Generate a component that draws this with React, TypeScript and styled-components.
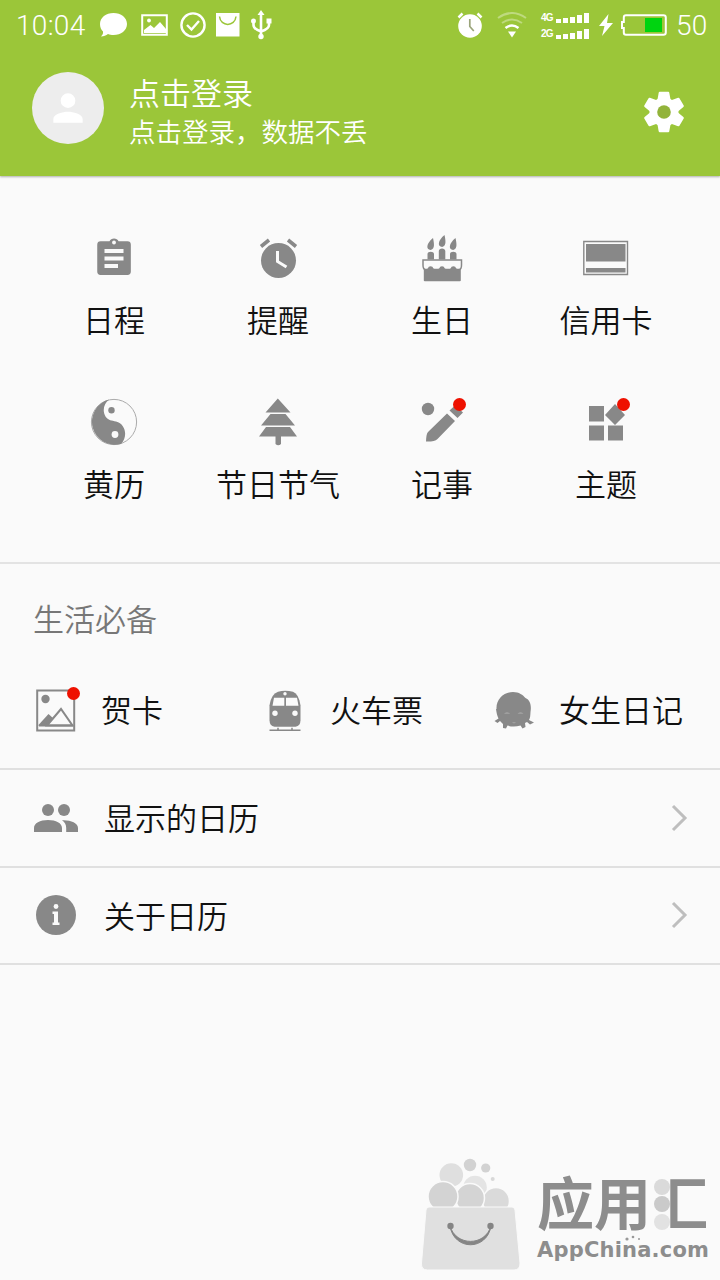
import React from 'react';
import styled, { createGlobalStyle } from 'styled-components';

const GREY = '#888888';
const GREEN = '#9bc639';
const PAPER = '#fafafa';

const GlobalStyle = createGlobalStyle`
  * { box-sizing: border-box; }
  body {
    margin: 0;
    background: ${PAPER};
    font-family: Roboto, "Noto Sans CJK SC", sans-serif;
    font-weight: 350;
    color: #111;
  }
  svg { display: block; flex: none; }
`;

const Page = styled.main`
  width: 720px;
  height: 1280px;
  display: flex;
  flex-direction: column;
  overflow: hidden;
  background: ${PAPER};
`;

const Header = styled.header`
  height: 176px;
  flex: none;
  background: ${GREEN};
  color: #fff;
  box-shadow: 0 1px 2px rgba(0, 0, 0, 0.3);
`;

const StatusBar = styled.div`
  height: 50px;
  padding: 0 12px 0 16px;
  display: flex;
  align-items: center;
`;

const StatusText = styled.span<{ $width: number; $gap?: number }>`
  width: ${(p) => p.$width}px;
  margin-left: ${(p) => p.$gap ?? 0}px;
  padding-top: 1px;
  font-size: 28px;
  font-weight: 300;
  letter-spacing: 0.3px;
  line-height: 50px;
  white-space: nowrap;
`;

const StatusIcon = styled.svg<{ $gap: number }>`
  margin-left: ${(p) => p.$gap}px;
`;

const Spacer = styled.div`
  flex: 1;
`;

const Signals = styled.div`
  width: 50px;
  margin-left: 14px;
  display: flex;
  flex-direction: column;
  gap: 5px;
`;

const SignalLine = styled.div`
  height: 11px;
  display: flex;
  align-items: flex-end;
  gap: 2px;
`;

const SignalLabel = styled.span`
  width: 13px;
  font: 700 10px/11px "Liberation Sans", sans-serif;
  letter-spacing: -0.8px;
`;

const SignalBar = styled.i<{ $h: number }>`
  width: 5px;
  height: ${(p) => p.$h}px;
  background: #fff;
`;

const Account = styled.div`
  height: 116px;
  padding: 0 32px;
  display: flex;
  align-items: center;
`;

const Avatar = styled.div`
  width: 72px;
  height: 72px;
  border-radius: 50%;
  background: #ededed;
  display: flex;
  align-items: center;
  justify-content: center;
`;

const AccountText = styled.div`
  flex: 1;
  margin-left: 25px;
  padding-top: 10px;
`;

const AccountTitle = styled.div`
  font-size: 31px;
  line-height: 40px;
`;

const AccountHint = styled.div`
  font-size: 26.5px;
  line-height: 36px;
`;

const SettingsButton = styled.div`
  margin-top: 8px;
`;

const Grid = styled.section`
  height: 388px;
  flex: none;
  padding: 51px 32px 0;
  display: grid;
  grid-template-columns: repeat(4, 164px);
  grid-auto-rows: 164px;
  border-bottom: 2px solid #e3e3e3;
`;

const Tile = styled.div`
  display: flex;
  flex-direction: column;
  align-items: center;
`;

const IconBox = styled.div`
  position: relative;
  width: 48px;
  height: 48px;
  margin: 7px 0;
`;

const Badge = styled.i<{ $top: number; $right: number }>`
  position: absolute;
  top: ${(p) => p.$top}px;
  right: ${(p) => p.$right}px;
  width: 13px;
  height: 13px;
  border-radius: 50%;
  background: #ee1100;
`;

const Label = styled.span`
  padding-top: 2px;
  font-size: 31px;
  line-height: 62px;
  white-space: nowrap;
`;

const Essentials = styled.section`
  height: 206px;
  flex: none;
  border-bottom: 2px solid #e0e0e0;
`;

const SectionTitle = styled.h2`
  margin: 0;
  padding: 27px 0 0 33px;
  font-size: 31px;
  font-weight: 350;
  line-height: 60px;
  color: #777;
`;

const Shortcuts = styled.div`
  margin-top: 26px;
  padding-left: 31px;
  display: grid;
  grid-template-columns: repeat(3, 229px);
`;

const Shortcut = styled.div`
  display: flex;
  align-items: center;
  gap: 22px;

  ${Label} {
    padding-top: 4px;
  }
`;

const Row = styled.div`
  height: 97.5px;
  flex: none;
  padding: 0 32px;
  display: flex;
  align-items: center;
  gap: 24px;
  border-bottom: 2px solid #e0e0e0;

  ${Label} {
    padding-top: 5px;
  }
`;

const Brand = styled.footer`
  margin-top: auto;
  padding: 0 9px 9px 0;
  display: flex;
  justify-content: flex-end;
  align-items: flex-end;
  gap: 14px;
  color: #8d8d8d;
`;

const Wordmark = styled.div`
  width: 174px;
  height: 96px;
`;

const BrandName = styled.div`
  position: relative;
  height: 62px;
  font: 700 57px/50px "Noto Sans CJK SC", sans-serif;
  white-space: nowrap;
`;

const ClippedGlyph = styled.span`
  display: inline-block;
  clip-path: inset(-10px 0 -10px 19px);
`;

const BrandDots = styled.svg`
  position: absolute;
  left: 116px;
  top: 0;
`;

const BrandUrl = styled.div`
  position: relative;
  font: 700 21px/26px "DejaVu Sans", sans-serif;
  letter-spacing: 0.2px;
  white-space: nowrap;
`;

const UrlDots = styled.svg`
  position: absolute;
  left: 86px;
  top: -2px;
`;

const Icon = ({ children }: { children: React.ReactNode }) => (
  <svg width="48" height="48" viewBox="0 0 48 48" fill={GREY}>{children}</svg>
);

const ScheduleIcon = () => (
  <Icon>
    <path d="M10 7h9.3a5.2 5.2 0 0 1 9.4 0H38a3.5 3.5 0 0 1 3.500 3.500v28a3.500 3.500 0 0 1-3.500 3.500H10a3.500 3.500 0 0 1-3.500-3.500v-28A3.500 3.500 0 0 1 10 7z" transform="translate(1 .6) scale(.96)" />
    <circle cx="24" cy="8.500" r="1.900" fill={PAPER} />
    <path d="M14.500 15h19v4h-19zM14.500 22.500h19v4h-19zM14.500 30h13.500v4H14.500z" fill={PAPER} />
  </Icon>
);

const ReminderIcon = () => (
  <Icon>
    <circle cx="24.500" cy="26.500" r="17.500" />
    <path d="M7 12.500l8-6.500M42 12.500l-8-6.500" stroke={GREY} strokeWidth="3.600" />
    <path d="M23.500 17v10.500l9 5.500" fill="none" stroke={PAPER} strokeWidth="3" />
  </Icon>
);

const CakeIcon = () => (
  <Icon>
    <path d="M15 4c.8 4 2.600 11-2.300 12-5-.5-4.500-6.500 2.300-12zM26.500 1c.8 4 2.600 11-2.300 12-5-.5-4.500-6.500 2.300-12zM37.500 4c.8 4 2.600 11-2.300 12-5-.5-4.500-6.500 2.300-12z" />
    <path d="M9.500 25.500V20c0-3 6.500-3 6.500 0v5.500zM20.800 25.500V17c0-3.500 6.500-3.500 6.500 0v8.500zM32 25.500V20c0-3 6.500-3 6.500 0v5.500z" />
    <path d="M5 26h38.500v5q0 4.500-2.500 4.500H7.500Q5 35.500 5 31z" fill="none" stroke={GREY} strokeWidth="1.500" />
    <path d="M5.800 34.500q2 1.500 4 0a2.900 2.900 0 0 1 5.600 0q3 2 5.800 0a2.900 2.900 0 0 1 5.600 0q3 2 5.800 0a2.900 2.900 0 0 1 5.600 0q2 1.500 4.600 0V46.500q0 .8-1 .8H6.800q-1 0-1-.8z" />
  </Icon>
);

const CardIcon = () => (
  <Icon>
    <path d="M1.800 7.500h43.700v33H1.800z" fill="none" stroke={GREY} strokeWidth="1.400" />
    <path d="M4 10h39.500v17.500H4zM4 34h39.500v4.500H4z" />
  </Icon>
);

const YinYangIcon = () => (
  <Icon>
    <circle cx="24" cy="24" r="22.600" fill={PAPER} stroke="#aaa" strokeWidth="1" />
    <path d="M19 1.500A23 23 0 1 0 31 46c7-7 5-20-5-22.500-4-1-8-1-10.500-5-3.500-6-1.500-13 3.500-17z" />
    <circle cx="21.500" cy="12.300" r="3.200" />
    <circle cx="25" cy="36.500" r="3.400" fill={PAPER} />
  </Icon>
);

const TreeIcon = () => (
  <Icon>
    <path d="M23.800 0.500L36.500 14.500H11.500zM16.500 16h15l9.500 11.500H7zM12 29h24l7 9.500H5zM21.500 38.500h5.500V46q-2.700 2.500-5.500 0z" />
  </Icon>
);

const NoteIcon = () => (
  <Icon>
    <circle cx="10" cy="11" r="6.200" />
    <path d="M29 15.500l8 7.500L19.500 41c-2 2-6 2.700-11.500 2.500.2-4 .5-8 2-9.500zM31.500 12.500l5.500-5 8 7-5.500 5.500z" />
  </Icon>
);

const ThemeIcon = () => (
  <Icon>
    <path d="M7 8h15v15.500H7zM7 27.500h15V42.500H7zM26 27.500h15V42.500H26zM33 6l10 11-10 10L23 17z" />
  </Icon>
);

const GreetingIcon = () => (
  <Icon>
    <path d="M6.200 4.500h37v40h-37z" fill="none" stroke={GREY} strokeWidth="2" />
    <circle cx="14.500" cy="13" r="4.200" />
    <path d="M7 39.500l10.500-11.500 5 4.500-6 7z" />
    <path d="M16 39.500L30 23l11.500 16.500z" fill={PAPER} stroke={GREY} strokeWidth="2" />
    <path d="M8 39.500h34" stroke={GREY} strokeWidth="1.800" />
  </Icon>
);

const TrainIcon = () => (
  <Icon>
    <g transform="translate(1 -.7)">
      <path d="M17 6.500q7-2 15 0Q38 9 39.500 20v15q0 5.500-5 6.500h-21q-5-1-5-6.500V20Q10 9 17 6.500z" />
      <path d="M13 12.500h10.300v8H11.500zM25 12.500h11l1.500 8H25z" fill={PAPER} />
      <g fill={PAPER}><circle cx="24" cy="8.500" r="1.700" /><circle cx="14" cy="28" r="2.700" /><circle cx="34" cy="28" r="2.700" /></g>
      <path d="M8.500 45h31M17 42.500v2M31 42.500v2" stroke={GREY} strokeWidth="1.500" />
    </g>
  </Icon>
);

const GirlIcon = () => (
  <Icon>
    <path transform="translate(1 0)" d="M6.500 23C6 13 14 6 23 6c6 0 10 3 12.500 6 5 2 6 8 5 14-.2 3-.2 6-1.500 8l5 2.500-4 2-3-2.500-2 1 .5 4-3 1.500-2-3q-7 2-13 0l-1.500 3-3-.5v-4l-3-3-2.500 2-3-2 4-2.500c-1.500-3-2-6-2.500-9.500z" />
    <path d="M15 27.500q3-2 6 0zM28.500 27.500q3-2 6 0z" fill="#b4b4b4" />
    <path d="M23 36.500q2 1.500 4 0z" fill="#b4b4b4" />
  </Icon>
);

const PeopleIcon = () => (
  <Icon>
    <circle cx="16" cy="16" r="6" />
    <circle cx="32" cy="16" r="6" />
    <path d="M2 38v-4c0-5 6-8 14-8s14 3 14 8v4zM30 26.200c8-.5 16 2.500 16 7.800v4H34.200v-4c0-3.500-1.500-6-4.200-7.800z" />
  </Icon>
);

const InfoIcon = () => (
  <Icon>
    <circle cx="24" cy="24" r="20" />
    <circle cx="24" cy="15.500" r="2.400" fill={PAPER} />
    <path d="M20.500 20.500h5.500v11h1.500V34h-7v-2.500H22v-8.500h-1.500z" fill={PAPER} />
  </Icon>
);

const Chevron = () => (
  <svg width="20" height="30" viewBox="0 0 20 30" fill="none" stroke="#bebebe" strokeWidth="3">
    <path d="M5 3l12 12L5 27" />
  </svg>
);

const GearIcon = () => (
  <svg width="48" height="48" viewBox="-24 -24 48 48" fill="#fff">
    <circle r="14.500" />
    {[0, 60, 120].map((angle) => (
      <path key={angle} transform={`rotate(${angle})`} d="M-4.300-20.300h8.600q.8 0 1 1L7-10v20l-1.700 9.300q-.2 1-1 1h-8.600q-.8 0-1-1L-7 10v-20l1.700-9.300q.2-1 1-1z" />
    ))}
    <circle r="6.800" fill="#92b33a" />
  </svg>
);

const BagLogo = () => (
  <svg width="104" height="116" viewBox="0 0 104 116">
    <circle cx="32.300" cy="20" r="11.800" fill="#dfdfdf" />
    <circle cx="51" cy="10" r="6.200" fill="#d2d2d2" />
    <circle cx="66.700" cy="13" r="4.600" fill="#d2d2d2" />
    <circle cx="73.700" cy="24" r="2" fill="#d8d8d8" />
    <circle cx="56" cy="32.500" r="11.800" fill="#e4e4e4" />
    <g stroke={PAPER} strokeWidth="1.500">
      <circle cx="77" cy="46" r="13.500" fill="#dadada" />
      <circle cx="51" cy="43" r="14.500" fill="#d4d4d4" />
      <circle cx="24" cy="41.500" r="15" fill="#d3d3d3" />
    </g>
    <path d="M10 52h83q2.500 0 3 3l5 53q.3 7-6 7H8.500q-6.500 0-6-7l4.500-53q.5-3 3-3z" fill="#e0e0e0" stroke={PAPER} strokeWidth="1" />
    <g fill="#858585"><circle cx="31.500" cy="71" r="3.200" /><circle cx="71.500" cy="71" r="3.200" /></g>
    <path d="M31 71c4 25 37 25 41 0-6 20.500-35 20.500-41 0z" fill="#858585" stroke="#858585" strokeWidth="1" />
  </svg>
);

const tiles = [
  { label: '日程', icon: <ScheduleIcon /> },
  { label: '提醒', icon: <ReminderIcon /> },
  { label: '生日', icon: <CakeIcon /> },
  { label: '信用卡', icon: <CardIcon /> },
  { label: '黄历', icon: <YinYangIcon /> },
  { label: '节日节气', icon: <TreeIcon /> },
  { label: '记事', icon: <NoteIcon />, badge: true },
  { label: '主题', icon: <ThemeIcon />, badge: true },
];

const shortcuts = [
  { label: '贺卡', icon: <GreetingIcon />, badge: true },
  { label: '火车票', icon: <TrainIcon /> },
  { label: '女生日记', icon: <GirlIcon /> },
];

const rows = [
  { label: '显示的日历', icon: <PeopleIcon /> },
  { label: '关于日历', icon: <InfoIcon /> },
];

const Status = () => (
  <StatusBar>
    <StatusText $width={70}>10:04</StatusText>
    <StatusIcon $gap={14} width="27" height="24" viewBox="0 0 27 24" fill="#fff">
      <path d="M13.500 0C21 0 27 4.500 27 11s-6 11-13.500 11c-2 0-4-.3-5.500-1-2 1.500-4 2.300-7 2.500 1.500-1.500 2.300-3 2-5C1 16.500 0 14 0 11 0 4.500 6 0 13.500 0z" />
    </StatusIcon>
    <StatusIcon $gap={14} width="27" height="22" viewBox="0 0 27 22">
      <path d="M1.200 1.200h24.600v19.600H1.200z" fill="none" stroke="#fff" strokeWidth="2" />
      <circle cx="8" cy="6.500" r="1.900" fill="#fff" />
      <path d="M3 19v-3l6.500-5 3.500 3 6-6 6 7v4z" fill="#fff" />
    </StatusIcon>
    <StatusIcon $gap={12} width="26" height="26" viewBox="0 0 26 26" fill="none" stroke="#fff" strokeWidth="2.400">
      <circle cx="13" cy="13" r="11.600" />
      <path d="M7 13l4.500 4.500L19 9" />
    </StatusIcon>
    <StatusIcon $gap={10} width="24" height="24" viewBox="0 0 24 24">
      <path d="M0 0h23.500v23.500H0z" fill="#fff" />
      <path d="M3.500 3.500c1 10.500 15.500 10.500 16.500 0" fill="none" stroke={GREEN} strokeWidth="1.500" />
    </StatusIcon>
    <StatusIcon $gap={10} width="22" height="30" viewBox="0 0 22 30" fill="#fff">
      <path d="M11 0l3.500 5h-7z" />
      <circle cx="11" cy="26.500" r="2.700" />
      <circle cx="3.500" cy="11" r="2.500" />
      <path d="M16.500 8.500h5v5h-5z" />
      <path d="M11 4v22M3.500 11v4q0 4 7.500 6.500Q19 19 19 15v-3" fill="none" stroke="#fff" strokeWidth="2.600" />
    </StatusIcon>
    <Spacer />
    <StatusIcon $gap={0} width="26" height="26" viewBox="0 0 26 26">
      <circle cx="13" cy="14" r="11.800" fill="#fff" />
      <path d="M1.500 5.500l4-4M24.500 5.500l-4-4" stroke="#fff" strokeWidth="2.500" />
      <path d="M12.800 7v7.500l4 4.500" fill="none" stroke="#9aa47a" strokeWidth="1.700" />
    </StatusIcon>
    <StatusIcon $gap={14} width="30" height="26" viewBox="0 0 30 26" fill="none" stroke="#fff">
      <path d="M1 6q14-10 28 0" strokeWidth="2" opacity=".35" />
      <path d="M5 11q10-7 20 0" strokeWidth="2" opacity=".35" />
      <path d="M8.500 16q6.500-5 13 0" strokeWidth="2.600" />
      <path d="M11 19.500h8l-4 6z" fill="#fff" stroke="none" />
    </StatusIcon>
    <Signals>
      {['4G', '2G'].map((name) => (
        <SignalLine key={name}>
          <SignalLabel>{name}</SignalLabel>
          {[4, 5, 6, 8, 10].map((h) => <SignalBar key={h} $h={h} />)}
        </SignalLine>
      ))}
    </Signals>
    <StatusIcon $gap={8} width="14" height="22" viewBox="0 0 14 22" fill="#fff">
      <path d="M9.500 0L0 12h5.500L3 22 14 9H8z" />
    </StatusIcon>
    <StatusIcon $gap={8} width="46" height="22" viewBox="0 0 46 22">
      <path d="M5 1.200h37.500q2.300 0 2.300 2.300v15q0 2.300-2.300 2.300H5q-2.200 0-2.200-2.300V14H1V8h1.800V3.500Q2.800 1.200 5 1.200z" fill="none" stroke="#fff" strokeWidth="2" />
      <path d="M24 4h17v14H24z" fill="#00d410" />
    </StatusIcon>
    <StatusText $width={32} $gap={9}>50</StatusText>
  </StatusBar>
);

export default function App() {
  return (
    <Page>
      <GlobalStyle />
      <Header>
        <Status />
        <Account>
          <Avatar>
            <svg width="44" height="44" viewBox="0 0 24 24" fill="#fff">
              <path d="M12 12a4 4 0 1 0 0-8 4 4 0 0 0 0 8zm0 2c-2.700 0-8 1.300-8 4v2h16v-2c0-2.700-5.300-4-8-4z" />
            </svg>
          </Avatar>
          <AccountText>
            <AccountTitle>点击登录</AccountTitle>
            <AccountHint>点击登录，数据不丢</AccountHint>
          </AccountText>
          <SettingsButton><GearIcon /></SettingsButton>
        </Account>
      </Header>
      <Grid>
        {tiles.map((t) => (
          <Tile key={t.label}>
            <IconBox>
              {t.icon}
              {t.badge && <Badge $top={0} $right={0} />}
            </IconBox>
            <Label>{t.label}</Label>
          </Tile>
        ))}
      </Grid>
      <Essentials>
        <SectionTitle>生活必备</SectionTitle>
        <Shortcuts>
          {shortcuts.map((s) => (
            <Shortcut key={s.label}>
              <IconBox>
                {s.icon}
                {s.badge && <Badge $top={1} $right={-1} />}
              </IconBox>
              <Label>{s.label}</Label>
            </Shortcut>
          ))}
        </Shortcuts>
      </Essentials>
      {rows.map((r) => (
        <Row key={r.label}>
          {r.icon}
          <Label>{r.label}</Label>
          <Spacer />
          <Chevron />
        </Row>
      ))}
      <Brand>
        <BagLogo />
        <Wordmark>
          <BrandName>
            应用<ClippedGlyph>汇</ClippedGlyph>
            <BrandDots width="20" height="60" viewBox="0 0 20 60">
              <circle cx="9" cy="12" r="8" fill="#dadada" />
              <circle cx="9" cy="29" r="8" fill="#cacaca" />
              <circle cx="9" cy="47" r="8" fill="#e2e2e2" />
            </BrandDots>
          </BrandName>
          <BrandUrl>
            AppChina.com
            <UrlDots width="22" height="8" viewBox="0 0 22 8" fill="#999">
              <circle cx="4" cy="4" r="1.600" /><circle cx="10" cy="2" r="1.300" /><circle cx="16" cy="4" r="1" />
            </UrlDots>
          </BrandUrl>
        </Wordmark>
      </Brand>
    </Page>
  );
}
